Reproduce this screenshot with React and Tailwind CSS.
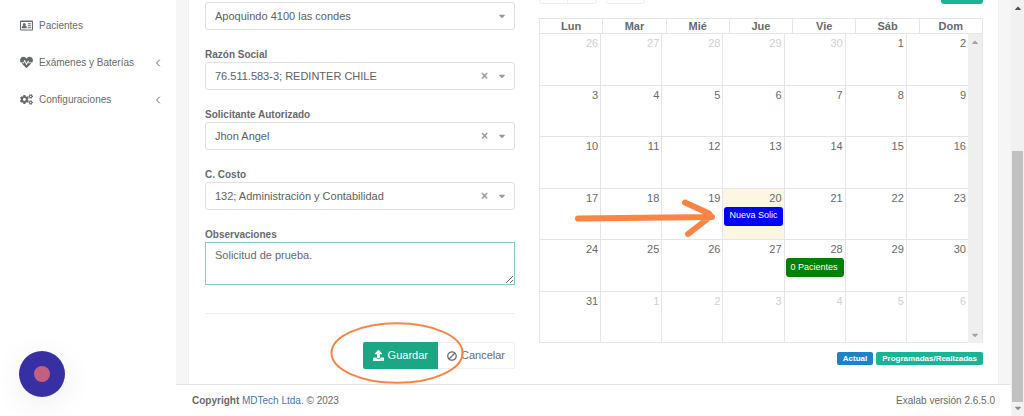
import React from "react";
import { FaHeartbeat, FaCogs, FaUpload, FaBan, FaCaretUp, FaCaretDown } from "react-icons/fa";
import { ChevronLeft } from "lucide-react";

function CardIcon({ className }) {
  return (
    <svg className={className} viewBox="0 0 26 26" fill="currentColor">
      <path fillRule="evenodd" d="M2 3h22a2 2 0 0 1 2 2v16a2 2 0 0 1-2 2H2a2 2 0 0 1-2-2V5a2 2 0 0 1 2-2zm0 3v15h22V6z" />
      <circle cx="8.500" cy="11" r="3" />
      <path d="M3.500 18.500v-2q0-3 2.500-3h5q2.500 0 2.500 3v2zM15.500 8.500h7v2h-7zM15.500 12.500h7v2h-7zM15.500 16.500h7v2h-7z" />
    </svg>
  );
}

const navItems = [
  { label: "Pacientes", Icon: CardIcon },
  { label: "Exámenes y Baterías", Icon: FaHeartbeat, sub: true },
  { label: "Configuraciones", Icon: FaCogs, sub: true },
];

const fields = [
  { id: "direccion", value: "Apoquindo 4100 las condes" },
  { id: "razon", label: "Razón Social", value: "76.511.583-3; REDINTER CHILE", clear: true },
  { id: "solicitante", label: "Solicitante Autorizado", value: "Jhon Angel", clear: true },
  { id: "costo", label: "C. Costo", value: "132; Administración y Contabilidad", clear: true },
];

const days = ["Lun", "Mar", "Mié", "Jue", "Vie", "Sáb", "Dom"];
const weeks = [
  [26, 27, 28, 29, 30, 1, 2],
  [3, 4, 5, 6, 7, 8, 9],
  [10, 11, 12, 13, 14, 15, 16],
  [17, 18, 19, 20, 21, 22, 23],
  [24, 25, 26, 27, 28, 29, 30],
  [31, 1, 2, 3, 4, 5, 6],
];
const events = {
  20: { text: "Nueva Solic", color: "bg-[#0000ff]" },
  28: { text: "0 Pacientes", color: "bg-[#008000]" },
};

function Sidebar() {
  return (
    <nav className="w-[176px] shrink-0 bg-white pt-[7px] text-[10px]">
      <ul>
        {navItems.map(({ label, Icon, sub }) => (
          <li key={label}>
            <a href="#" className="flex h-[37px] items-center gap-[6px] pr-3 pl-5">
              <Icon className="size-[13px] shrink-0" />
              <span className="grow whitespace-nowrap">{label}</span>
              {sub && <ChevronLeft className="size-3 shrink-0" />}
            </a>
          </li>
        ))}
      </ul>
    </nav>
  );
}

function SelectField({ id, label, value, clear }) {
  return (
    <div className="mb-4">
      {label && (
        <label htmlFor={id} className="block h-4 text-[10px] leading-[18px] font-bold">
          {label}
        </label>
      )}
      <div className="relative">
        <select
          id={id}
          aria-label={label || "Dirección"}
          className="block h-7 w-full appearance-none rounded-[3px] border border-[#dfe1e3] bg-white px-[9px] text-[#5d6062]"
        >
          <option>{value}</option>
        </select>
        {clear && (
          <button type="button" aria-label="Quitar" className="absolute inset-y-0 right-[27px] text-[12px] font-bold text-[#999]">
            ×
          </button>
        )}
        <FaCaretDown className="pointer-events-none absolute top-[9px] right-2 size-[10px] text-[#999]" />
      </div>
    </div>
  );
}

function RequestForm() {
  return (
    <form className="w-[310px] shrink-0 pt-[2px]" onSubmit={(e) => e.preventDefault()}>
      {fields.map((f) => (
        <SelectField key={f.id} {...f} />
      ))}
      <label htmlFor="obs" className="block h-4 text-[10px] leading-[18px] font-bold">
        Observaciones
      </label>
      <textarea
        id="obs"
        defaultValue="Solicitud de prueba."
        className="block h-[43px] w-full resize border border-[#7fcfbe] bg-white px-[9px] py-1 leading-4 outline-none"
      />
      <hr className="my-7 border-[#eeeff0]" />
      <div className="relative flex justify-end">
        <button className="flex h-[27px] items-center gap-1 rounded-l-[2px] bg-[#1ba784] px-[10px] text-white">
          <FaUpload className="size-[11px]" /> Guardar
        </button>
        <button type="button" className="flex h-[27px] items-center gap-1 rounded-r-[2px] border border-l-0 border-[#eeeff0] px-[9px]">
          <FaBan className="size-[10px] -scale-x-100" /> Cancelar
        </button>
        <svg className="pointer-events-none absolute -top-[20px] right-[51px] h-[62px] w-[134px]" viewBox="0 0 134 62" fill="none">
          <ellipse cx="67" cy="31" rx="65.5" ry="29.8" stroke="#fd8445" strokeWidth="2" />
        </svg>
      </div>
    </form>
  );
}

function DayCell({ day, week }) {
  const muted = (week === 0 && day > 20) || (week === 5 && day < 10);
  const today = week === 3 && day === 20;
  const event = week > 2 && week < 5 ? events[day] : null;
  return (
    <td
      className={`h-[51px] border-r border-b border-[#e4e5e7] p-0 align-top last:border-r-0 ${today ? "bg-[#fcf6e2]" : ""} ${muted ? "text-[#cfd0d1]" : ""}`}
    >
      <div className="pr-[2px] text-right leading-[18px]">{day}</div>
      {event && (
        <a href="#" className={`mx-px flex h-[19px] items-center overflow-hidden rounded-[3px] pl-[5px] text-[9px] whitespace-nowrap text-white ${event.color}`}>
          {event.text}
        </a>
      )}
    </td>
  );
}

function Calendar() {
  return (
    <section className="min-w-0 grow">
      <div className="flex h-1 gap-[9px]">
        <div className="flex">
          <button aria-label="Anterior" className="w-[29px] rounded-bl-[3px] border border-t-0 border-[#eeeff0]" />
          <button aria-label="Siguiente" className="w-[29px] rounded-br-[3px] border border-t-0 border-l-0 border-[#eeeff0]" />
        </div>
        <button aria-label="Hoy" className="w-[39px] rounded-b-[3px] border border-t-0 border-[#eeeff0]" />
        <button aria-label="Nuevo" className="ml-auto w-[42px] rounded-b-[3px] bg-[#1ab394]" />
      </div>
      <div className="relative mt-[14px]">
        <table className="w-full table-fixed border-collapse">
          <thead>
            <tr>
              {days.map((d) => (
                <th key={d} className="h-[15px] border border-[#e4e5e7] p-0 leading-[14px] font-bold">
                  {d}
                </th>
              ))}
            </tr>
          </thead>
        </table>
        <div className="flex border-x border-[#e4e5e7]">
          <div className="min-w-0 grow">
            <table className="h-[309px] w-full table-fixed border-separate border-spacing-0">
              <tbody>
                {weeks.map((week, w) => (
                  <tr key={w}>
                    {week.map((day) => (
                      <DayCell key={day} day={day} week={w} />
                    ))}
                  </tr>
                ))}
              </tbody>
            </table>
          </div>
          <div className="flex w-[14px] shrink-0 flex-col items-center justify-between bg-[#efefef] py-[3px] text-[#a3a3a3]">
            <FaCaretUp className="size-[10px]" />
            <FaCaretDown className="size-[10px]" />
          </div>
        </div>
        <svg className="pointer-events-none absolute top-[178px] left-9 h-[44px] w-[145px]" viewBox="0 0 145 44" fill="none" stroke="#fd8445" strokeWidth="6" strokeLinecap="round" strokeLinejoin="round">
          <path d="M3 22.5L137 21M110 6.500L134 17.500Q137 20 133 22.500L113 38" />
        </svg>
      </div>
      <div className="mt-[9px] flex justify-end gap-[3px] text-[8px] leading-[13px] font-bold text-white">
        <span className="rounded-[2px] bg-[#1c84c6] px-[6px]">Actual</span>
        <span className="rounded-[2px] bg-[#1ab394] px-[6px]">Programadas/Realizadas</span>
      </div>
    </section>
  );
}

export default function App() {
  return (
    <div className="flex h-screen overflow-hidden bg-white font-['Liberation_Sans',Arial,sans-serif] text-[11px] text-[#676a6c]">
      <Sidebar />
      <div className="flex min-w-0 grow flex-col">
        <div className="grow bg-[#f6f6f7] px-3">
          <main className="flex h-full gap-6 border-x border-[#eeeff0] bg-white pr-[15px] pl-4">
            <RequestForm />
            <Calendar />
          </main>
        </div>
        <footer className="flex h-8 shrink-0 items-center justify-between border-t border-[#e4e5e7] px-4 text-[10px]">
          <div>
            <strong>Copyright</strong> <a href="#" className="text-[#4379ae]">MDTech Ltda.</a> © 2023
          </div>
          <div>Exalab versión 2.6.5.0</div>
        </footer>
      </div>
      <div className="flex w-[13px] shrink-0 flex-col items-center bg-[#f1f1f1] py-[3px]">
        <FaCaretUp className="size-[10px] text-[#505050]" />
        <div className="mt-auto h-[251px] w-[11px] bg-[#c1c1c1]" />
        <FaCaretDown className="mt-px size-[10px] text-[#8a8a8a]" />
      </div>
      <button aria-label="Grabar" className="fixed bottom-[19px] left-[19px] flex size-[46px] items-center justify-center rounded-full bg-[#372fa2] shadow-[0_6px_30px_rgba(0,0,0,0.08)]">
        <span className="size-4 rounded-full bg-[#c4607f]" />
      </button>
    </div>
  );
}
